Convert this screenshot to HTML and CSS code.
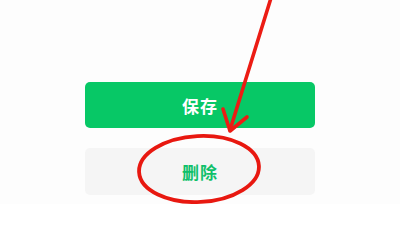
FILE: index.html
```html
<!DOCTYPE html>
<html lang="zh">
<head>
<meta charset="utf-8">
<link rel="stylesheet" href="styles.css">
</head>
<body>
<div class="page">
  <div class="actions">
    <button class="btn btn-primary">保存</button>
    <button class="btn btn-secondary">删除</button>
  </div>
  <svg class="annotation" width="400" height="204" viewBox="0 0 400 204">
    <path d="M271 -2 L230 130" fill="none" stroke="#ec1c14" stroke-width="3.6" stroke-linecap="round"/>
    <path d="M223 109 L230 131 L247 117" fill="none" stroke="#ec1c14" stroke-width="3.6" stroke-linecap="round" stroke-linejoin="round"/>
    <ellipse cx="199" cy="169" rx="60" ry="33" fill="none" stroke="#e81810" stroke-width="3.8" transform="rotate(-3 199 169)"/>
  </svg>
</div>
</body>
</html>
```
FILE: styles.css
```css
html, body {
  margin: 0;
  padding: 0;
  background: #ffffff;
}
.page {
  position: relative;
  width: 400px;
  height: 204px;
  overflow: hidden;
  background: #fdfdfd;
}
.actions {
  display: flex;
  flex-direction: column;
  gap: 20px;
  padding-top: 82px;
  padding-left: 85px;
  width: 230px;
}
.btn {
  height: 46px;
  border: none;
  border-radius: 5px;
  font-family: "Noto Sans CJK SC", "Noto Sans", sans-serif;
  font-size: 17px;
  font-weight: 700;
  letter-spacing: 1px;
  padding: 0;
}
.btn-primary {
  background: #07c866;
  color: #ffffff;
}
.btn-secondary {
  height: 47px;
  background: #f5f5f5;
  color: #0fc06a;
}
.annotation {
  position: absolute;
  left: 0;
  top: 0;
}
```
